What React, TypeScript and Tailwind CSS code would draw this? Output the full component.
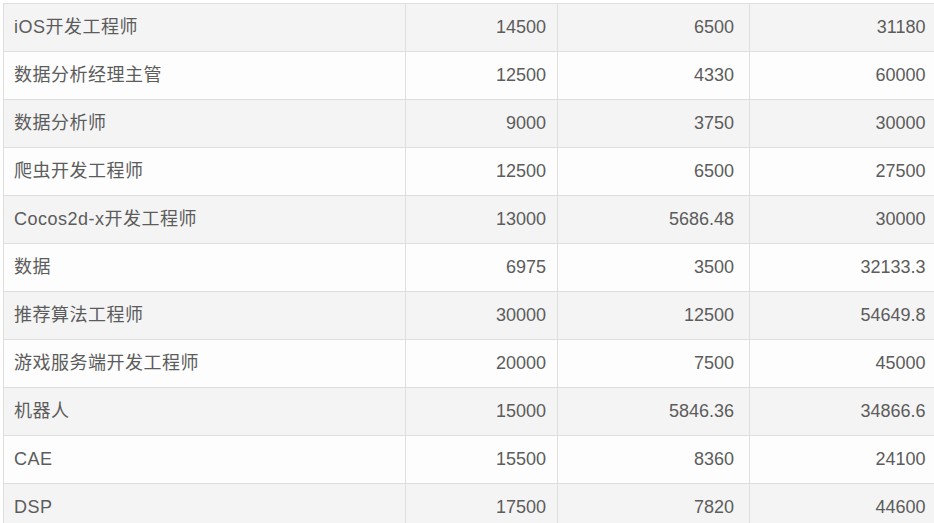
const rows: [string, string, string, string][] = [
  ['iOS开发工程师', '14500', '6500', '31180'],
  ['数据分析经理主管', '12500', '4330', '60000'],
  ['数据分析师', '9000', '3750', '30000'],
  ['爬虫开发工程师', '12500', '6500', '27500'],
  ['Cocos2d-x开发工程师', '13000', '5686.48', '30000'],
  ['数据', '6975', '3500', '32133.3'],
  ['推荐算法工程师', '30000', '12500', '54649.8'],
  ['游戏服务端开发工程师', '20000', '7500', '45000'],
  ['机器人', '15000', '5846.36', '34866.6'],
  ['CAE', '15500', '8360', '24100'],
  ['DSP', '17500', '7820', '44600'],
]

export default function App() {
  return (
    <div className="h-[523px] w-[934px] overflow-hidden bg-white pl-[3px] pt-[3px]">
      <table
        className="w-[932px] table-fixed border-collapse text-[18px] text-[#5c5c5c]"
        style={{ fontFamily: '"Liberation Sans", Arial, "Noto Sans CJK SC", sans-serif' }}
      >
        <colgroup>
          <col className="w-[402px]" />
          <col className="w-[152px]" />
          <col className="w-[192px]" />
          <col className="w-[186px]" />
        </colgroup>
        <tbody>
          {rows.map((r, i) => (
            <tr key={i} className={`h-[48px] ${i % 2 === 0 ? 'bg-[#f4f4f4]' : 'bg-[#fdfdfd]'}`}>
              <td className="border border-[#dedede] pl-[10px] text-left tracking-[0.5px]">{r[0]}</td>
              <td className="border border-[#dedede] pr-[11px] text-right">{r[1]}</td>
              <td className="border border-[#dedede] pr-[15px] text-right">{r[2]}</td>
              <td className="border border-r-0 border-[#dedede] pr-[10px] text-right">{r[3]}</td>
            </tr>
          ))}
        </tbody>
      </table>
    </div>
  )
}
